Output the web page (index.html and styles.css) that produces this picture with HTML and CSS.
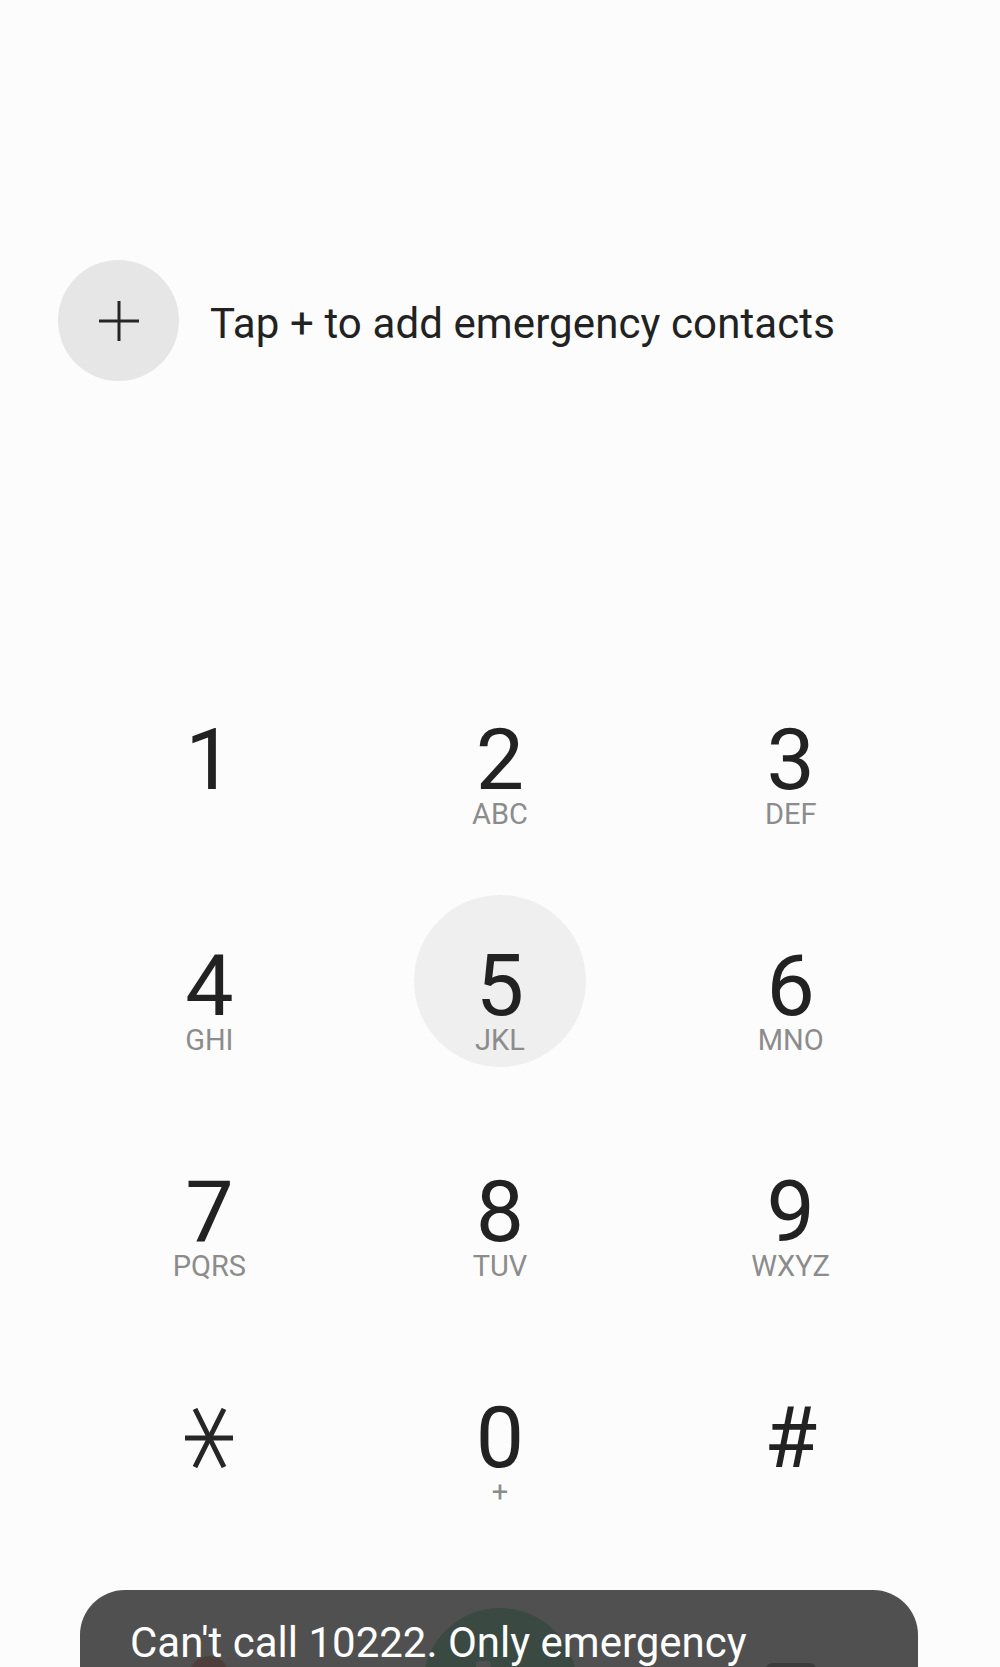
FILE: index.html
```html
<!DOCTYPE html>
<html lang="en">
<head>
  <meta charset="UTF-8">
  <title>Emergency call</title>
  <link rel="stylesheet" href="styles.css">
</head>
<body>
  <div class="contacts">
    <div class="add-btn">
      <svg width="42" height="42" viewBox="0 0 42 42">
        <line x1="1" y1="21" x2="41" y2="21" stroke="#262626" stroke-width="3"/>
        <line x1="21" y1="1" x2="21" y2="41" stroke="#262626" stroke-width="3"/>
      </svg>
    </div>
    <span class="contacts-text">Tap + to add emergency contacts</span>
  </div>

  <div class="keypad">
    <div class="key"><div class="key-face"><span class="digit">1</span></div></div>
    <div class="key"><div class="key-face"><span class="digit">2</span><span class="letters">ABC</span></div></div>
    <div class="key"><div class="key-face"><span class="digit">3</span><span class="letters">DEF</span></div></div>
    <div class="key"><div class="key-face"><span class="digit">4</span><span class="letters">GHI</span></div></div>
    <div class="key"><div class="key-face pressed"><span class="digit">5</span><span class="letters">JKL</span></div></div>
    <div class="key"><div class="key-face"><span class="digit">6</span><span class="letters">MNO</span></div></div>
    <div class="key"><div class="key-face"><span class="digit">7</span><span class="letters">PQRS</span></div></div>
    <div class="key"><div class="key-face"><span class="digit">8</span><span class="letters">TUV</span></div></div>
    <div class="key"><div class="key-face"><span class="digit">9</span><span class="letters">WXYZ</span></div></div>
    <div class="key">
      <div class="key-face">
        <span class="digit">
          <svg class="star" width="52" height="60" viewBox="0 0 52 60">
            <line x1="12" y1="1" x2="41" y2="59" stroke="#262626" stroke-width="5"/>
            <line x1="41" y1="1" x2="12" y2="59" stroke="#262626" stroke-width="5"/>
            <line x1="2" y1="30" x2="50" y2="30" stroke="#262626" stroke-width="5"/>
          </svg>
        </span>
      </div>
    </div>
    <div class="key"><div class="key-face"><span class="digit">0</span><span class="letters">+</span></div></div>
    <div class="key"><div class="key-face"><span class="digit">#</span></div></div>
  </div>

  <div class="actions">
    <div class="side-btn red"></div>
    <div class="call-btn">
      <svg width="64" height="64" viewBox="0 0 24 24">
        <path fill="#fff" d="M6.6 10.8c1.4 2.8 3.8 5.1 6.6 6.6l2.2-2.2c.3-.3.7-.4 1-.2 1.1.4 2.3.6 3.6.6.6 0 1 .4 1 1V20c0 .6-.4 1-1 1C10.6 21 3 13.4 3 4c0-.6.4-1 1-1h3.5c.6 0 1 .4 1 1 0 1.3.2 2.5.6 3.6.1.3 0 .7-.2 1L6.6 10.8z"/>
      </svg>
    </div>
    <div class="side-btn back"></div>
  </div>

  <div class="toast">Can't call 10222. Only emergency numbers can be called.</div>
</body>
</html>
```

FILE: styles.css
```css
html, body {
  margin: 0;
  padding: 0;
  height: 1667px;
  overflow: hidden;
  font-family: Roboto, "Liberation Sans", sans-serif;
  background: #fcfcfc;
  color: #222;
}
body {
  position: relative;
}
.contacts {
  display: flex;
  align-items: center;
  gap: 31px;
  padding: 260px 0 0 58px;
}
.add-btn {
  width: 121px;
  height: 121px;
  border-radius: 50%;
  background: #e6e6e6;
  display: flex;
  align-items: center;
  justify-content: center;
}
.add-btn svg { display: block; }
.contacts-text {
  margin-top: 5px;
  font-size: 42px;
  letter-spacing: 0.1px;
  color: #222;
}
.keypad {
  display: grid;
  grid-template-columns: repeat(3, 1fr);
  grid-auto-rows: 226px;
  padding: 0 64px;
  margin-top: 261px;
}
.key {
  display: flex;
  align-items: center;
  justify-content: center;
}
.key-face {
  width: 172px;
  height: 172px;
  border-radius: 50%;
  box-sizing: border-box;
  padding-top: 51px;
  text-align: center;
}
.key-face.pressed { background: #efefef; }
.digit {
  display: block;
  height: 80px;
  font-size: 86px;
  line-height: 80px;
  color: #222;
}
.letters {
  display: block;
  font-size: 29px;
  line-height: 29px;
  color: #8c8c8c;
}
.star {
  display: block;
  margin: 10px auto 0;
}
.actions {
  display: grid;
  grid-template-columns: repeat(3, 1fr);
  justify-items: center;
  align-items: start;
  padding: 0 64px;
  margin-top: 62px;
}
.call-btn {
  width: 154px;
  height: 154px;
  border-radius: 50%;
  background: #20b46a;
  display: flex;
  align-items: center;
  justify-content: center;
}
.side-btn.red {
  width: 40px;
  height: 40px;
  margin-top: 48px;
  border-radius: 50%;
  background: #e04a3a;
}
.side-btn.back {
  width: 50px;
  height: 36px;
  margin-top: 55px;
  border-radius: 6px;
  background: #333;
}
.toast {
  position: absolute;
  left: 80px;
  top: 1590px;
  width: 838px;
  height: 160px;
  box-sizing: border-box;
  padding: 28px 50px;
  border-radius: 45px;
  background: rgba(61, 61, 61, 0.9);
  color: #fff;
  font-size: 42px;
  line-height: 49px;
}
```
